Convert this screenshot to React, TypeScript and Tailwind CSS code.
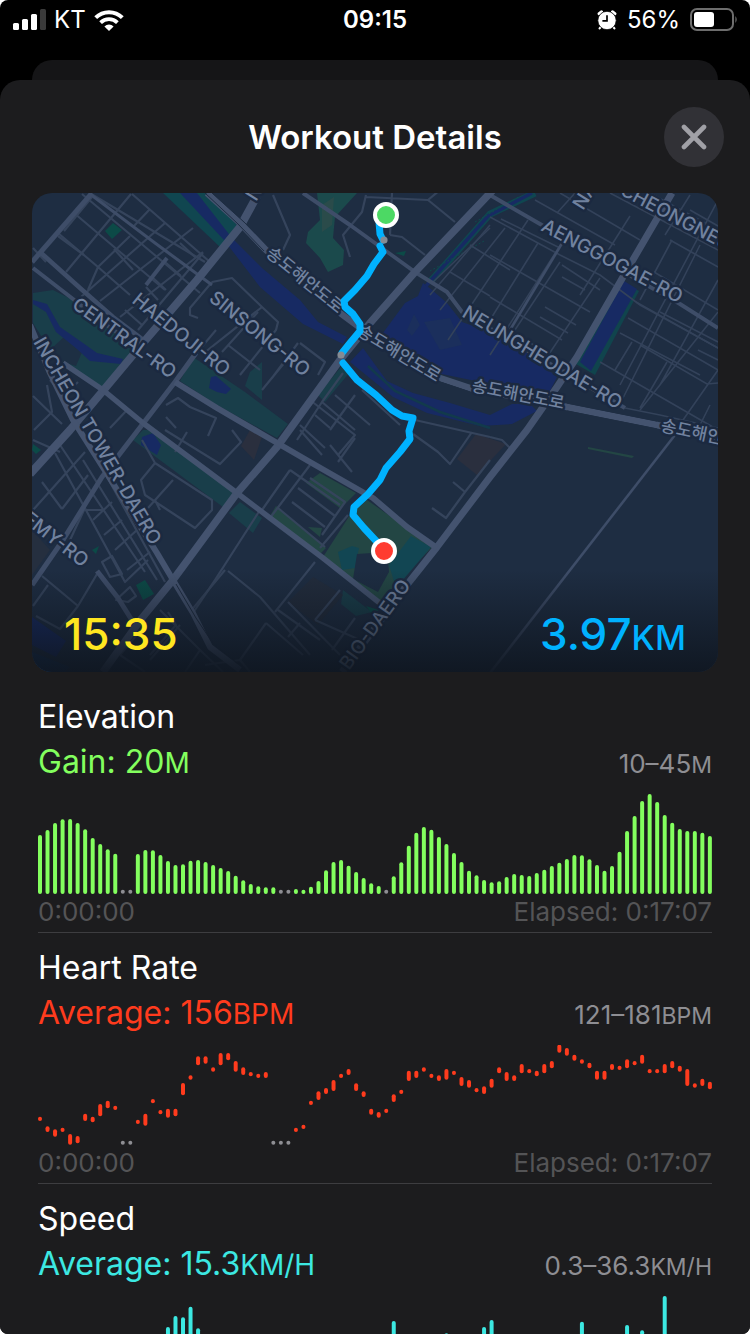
import React from 'react';

const SLOTS = 90;
const PITCH = 22.58;

type Bar = { slot: number; top: number; bottom: number; idle?: boolean };

// Heights run from 0 to 300; a zero marks a pause in the workout.
const elevation = [
  177, 192, 213, 224, 225, 213, 194, 168, 150, 134, 121, 0, 0, 120, 132, 131, 117, 99, 87, 89, 100, 102, 96, 87, 78, 69,
  55, 41, 30, 23, 20, 20, 0, 0, 15, 13, 22, 39, 71, 96, 102, 85, 66, 48, 32, 24, 0, 53, 95, 145, 184, 201, 193, 171, 150,
  123, 96, 70, 56, 42, 35, 38, 51, 60, 57, 54, 63, 73, 84, 94, 105, 117, 116, 104, 87, 70, 84, 127, 189, 234, 279, 300,
  276, 237, 214, 195, 189, 189, 184, 174,
];

const heart: ([number, number] | null)[] = [
  [260, 273], [289, 306], [298, 320], [293, 306], [312, 344], [318, 340], [251, 273], [260, 277], [222, 259], [212, 235],
  [227, 240], null, null, [269, 282], [251, 287], [207, 220], [240, 253], [236, 263], [236, 259], [159, 196], [136, 149],
  [79, 106], [79, 101], [112, 125], [69, 106], [69, 91], [93, 125], [112, 135], [126, 139], [131, 144], [126, 144], null,
  null, null, [293, 306], [284, 297], [212, 225], [184, 210], [174, 192], [150, 183], [131, 144], [117, 135], [160, 183],
  [184, 201], [236, 254], [246, 263], [236, 249], [193, 216], [179, 192], [122, 153], [122, 144], [112, 125], [131, 144],
  [136, 153], [117, 149], [122, 135], [141, 168], [150, 173], [174, 187], [169, 192], [146, 173], [112, 130], [126, 153],
  [136, 153], [102, 130], [117, 130], [122, 139], [102, 130], [93, 115], [44, 68], [54, 77], [74, 92], [88, 101],
  [98, 115], [122, 149], [122, 149], [102, 120], [107, 120], [88, 115], [93, 106], [74, 101], [117, 130], [117, 130],
  [102, 130], [93, 115], [107, 125], [117, 168], [160, 173], [146, 168], [155, 178],
];

const speed = [
  40, 62, 85, 90, 110, 96, 120, 132, 104, 98, 70, 0, 0, 64, 102, 140, 168, 207, 240, 236, 268, 203, 160, 142, 120, 96,
  110, 88, 92, 70, 48, 0, 0, 0, 30, 54, 90, 112, 134, 150, 142, 120, 96, 80, 72, 60, 0, 225, 160, 132, 148, 120, 110, 140,
  188, 162, 130, 120, 150, 207, 228, 166, 140, 132, 120, 144, 158, 132, 120, 98, 126, 160, 223, 170, 142, 130, 120, 152,
  213, 166, 197, 150, 132, 300, 170, 168, 140, 122, 110, 96,
];

const fromHeights = (values: number[]): Bar[] =>
  values.map((h, slot) => (h ? { slot, top: 300 - h, bottom: 300 } : { slot, top: 287, bottom: 299, idle: true }));

const fromRanges = (values: ([number, number] | null)[]): Bar[] =>
  values.map((v, slot) =>
    v ? { slot, top: v[0] - 45, bottom: v[1] - 45 } : { slot, top: 287, bottom: 299, idle: true },
  );

function Chart({ bars, color, label }: { bars: Bar[]; color: string; label: string }) {
  return (
    <svg viewBox={`0 0 ${Math.round(SLOTS * PITCH - 10)} 300`} className="mt-[10px] block w-full" role="img" aria-label={label}>
      {bars.map((b) => (
        <rect
          key={b.slot}
          x={b.slot * PITCH}
          y={b.top}
          width={12}
          height={b.bottom - b.top}
          rx={6}
          fill={b.idle ? '#8e8e93' : color}
        />
      ))}
    </svg>
  );
}

type MetricProps = {
  title: string;
  summary: string;
  range: string;
  unit: string;
  tone: string;
  color: string;
  bars: Bar[];
};

function Metric({ title, summary, range, unit, tone, color, bars }: MetricProps) {
  return (
    <section className="mb-3 border-b border-[#3d3d40] pb-1">
      <h2 className="text-[32px] leading-[45px] text-white">{title}</h2>
      <div className="flex h-[45px] items-baseline justify-between leading-[45px]">
        <p className={`text-[32px] ${tone}`}>
          {summary}
          <span className="text-[28px]">{unit}</span>
        </p>
        <p className="text-[26px] text-[#8e8e93]">
          {range}
          <span className="text-[23px]">{unit}</span>
        </p>
      </div>
      <Chart bars={bars} color={color} label={`${title} over time`} />
      <div className="mt-[2px] flex justify-between text-[26px] leading-8 text-[#545456]">
        <span>0:00:00</span>
        <span>Elapsed: 0:17:07</span>
      </div>
    </section>
  );
}

function StatusBar() {
  return (
    <header className="grid h-10 grid-cols-3 items-center px-3 text-white">
      <div className="flex items-center gap-2">
        <svg viewBox="0 0 34 22" className="h-[22px] w-[34px]" fill="#fff" aria-label="Signal">
          <rect x="1" y="14" width="6" height="7" rx="1.5" />
          <rect x="10" y="10" width="6" height="11" rx="1.5" />
          <rect x="19" y="5" width="6" height="16" rx="1.5" />
          <rect x="28" y="0" width="6" height="21" rx="1.5" fill="#3a3a3a" />
        </svg>
        <span className="text-[24px] leading-8">KT</span>
        <svg viewBox="0 0 30 22" className="h-[22px] w-[30px]" aria-label="Wi-Fi">
          <path d="M15 22 L10.4 17.4 A6.5 6.5 0 0 1 19.6 17.4 Z" fill="#fff" />
          <path d="M6.6 13.6 A11.9 11.9 0 0 1 23.4 13.6" fill="none" stroke="#fff" strokeWidth="3.8" />
          <path d="M1.7 8.7 A18.8 18.8 0 0 1 28.3 8.7" fill="none" stroke="#fff" strokeWidth="4" />
        </svg>
      </div>
      <time className="text-center text-[24px] font-semibold leading-8">09:15</time>
      <div className="flex items-center justify-end gap-[10px]">
        <svg viewBox="0 0 20 20" className="size-5" aria-label="Alarm">
          <g stroke="#fff" strokeWidth="2.2" strokeLinecap="round">
            <path d="M2.2 3.8 L4.4 1.9" strokeWidth="3.2" />
            <path d="M17.8 3.8 L15.6 1.9" strokeWidth="3.2" />
            <path d="M4.6 16 L2.6 18.4 M15.4 16 L17.4 18.4" />
          </g>
          <circle cx="10" cy="10.5" r="9.2" fill="#fff" stroke="#000" strokeWidth="0.8" />
          <path d="M10 5.2 V10.8 H5.4" fill="none" stroke="#000" strokeWidth="1.7" />
        </svg>
        <span className="text-[24px] leading-8">56%</span>
        <svg viewBox="0 0 48 24" className="h-6 w-12" aria-label="Battery">
          <rect x="1" y="1" width="42" height="21" rx="6" fill="none" stroke="#6d6d6d" strokeWidth="2" />
          <rect x="4" y="4" width="20" height="15" rx="3" fill="#fff" />
          <path d="M45.4 8 Q48 11.5 45.4 15 Z" fill="#6d6d6d" />
        </svg>
      </div>
    </header>
  );
}

// Streets around the blocks, in map coordinates.
const minorRoads = [
  // north-west blocks
  'M74 213 L165 290 M93 195 L205 262 M132 194 L210 262 M58 236 L84 255 M82 194 L200 293',
  'M131 194 L66 272 M150 209 L133 227 M165 223 L81 297 M193 228 L100 301 M203 252 L120 317',
  'M92 197 L64 231 M114 249 L133 270 M98 267 L72 245 M98 267 L130 295 M98 267 L88 290 M33 248 L46 262 M58 233 L98 267 L130 236',
  'M203 253 L138 330 M180 243 L196 258 M165 262 L181 276 M152 277 L166 290 M146 287 L158 300 M125 310 L142 325',
  'M212 282 L232 278 L262 307 L204 353 M212 282 L190 308 L190 315 L198 318 M262 307 L278 322 L276 330 L240 375',
  'M228 345 L260 370 M258 312 L222 352 M195 355 L216 330 M300 343 L325 362 L318 375 M272 378 L298 343 M262 390 L285 362',
  'M166 405 L178 398 L190 407 L216 418 L208 436 M166 417 L176 428 M110 428 L128 409',
  // south-west blocks
  'M33 396 L62 424 M33 440 L60 452 M47 385 L52 412 L34 430 M78 382 L64 396 L50 380',
  'M55 453 L125 582 L148 560 M60 445 L145 572 M83 460 L157 580 M95 455 L165 582 M42 482 L62 509 M33 510 L85 452',
  'M62 509 L88 475 M80 510 L104 510 M93 520 L112 502 M104 535 L122 520 M115 550 L137 530 M127 570 L150 552',
  'M84 510 L70 540 M102 562 L110 577 L122 574 L112 556 Z M116 600 L130 587 L136 596 L128 602 Z',
  'M42 576 L78 606 L60 629 L36 616 M33 606 L48 585 M97 574 L78 606',
  'M142 440 L155 463 L141 480 L145 495 L195 528 L212 510 L212 500 L155 463 M173 480 L148 508 M155 500 L160 510',
  'M165 430 L220 464 L241 442 L232 430 M187 432 L175 452',
  'M160 610 L200 650 L185 672 M180 625 L150 660 M190 612 L225 570 M200 650 L223 672 M120 655 L145 672 M120 655 L145 625 M168 612 L176 625 L150 655',
  // southern blocks
  'M260 510 L215 580 L193 613 M228 571 L260 597 M315 562 L275 612 M278 610 L320 640 M260 597 L310 655 M288 602 L340 655',
  'M340 590 L315 620 M315 620 L360 640 M332 650 L355 618 M266 623 L240 660 L250 672 M288 637 L300 623 M266 623 L303 655 M240 660 L205 665',
  // blocks around the lake bank
  'M343 373 L322 402 L297 440 M322 402 L355 430 M335 395 L370 425 M355 395 L330 430 M362 390 L400 425 M310 400 L355 435 L338 455',
  'M300 425 L325 448 M315 415 L330 428 M330 445 L352 472 M322 455 L300 430 M355 438 L338 462',
  'M290 470 L340 505 M310 478 L345 502 L322 535 M290 470 L262 510 M298 488 L335 516 M292 502 L325 527 M310 465 L270 518 M320 548 L348 515 M278 508 L325 547',
  'M415 420 L490 437 M413 434 L438 452 L450 464 L472 432 M453 482 L465 492 L446 518 L432 508 M465 492 L490 460',
  'M490 437 L502 440 L510 448 L490 478',
  // northern blocks
  'M366 195 L362 212 L343 235 L350 257 M273 195 L290 235 L283 250 M366 197 L428 200 L440 190 M428 200 L455 222 M390 235 L402 237 L425 255 M378 205 L379 220 M392 193 L390 235',
];

const gridRoads = [
  'M490 217 L560 255 L600 275 L640 305 L718 348 M501 219 L560 248 M490 255 L590 312 M490 297 L562 340 M450 272 L490 296 M535 200 L615 245 M560 193 L640 240',
  'M610 193 L718 250 M650 193 L718 230 M690 210 L718 226 M670 240 L718 267 M654 272 L718 310 M636 302 L718 348 M628 318 L718 370 M620 333 L700 375',
  'M600 362 L718 430 M660 312 L718 342 M562 265 L600 290 M562 277 L585 290 M545 307 L576 325 M540 317 L568 333 M525 340 L560 360 M698 350 L718 360',
  'M575 193 L557 213 M570 230 L490 355 M538 243 L490 320 M528 220 L448 340 M505 228 L440 310 M490 225 L430 295 M560 262 L505 345 M600 278 L545 360 M630 216 L580 295',
  'M718 200 L620 385 M700 245 L622 400 M672 240 L640 300 M690 195 L665 235 M718 280 L660 385 M718 312 L640 410 M632 342 L615 370 M718 370 L683 420 M667 362 L640 408',
  'M718 383 L707 384 L640 345 M625 408 L660 415 L718 428 M700 425 L710 405',
  'M432 283 L490 228 M470 245 L510 270',
];

const mapLabels = [
  { x: 71, y: 307, r: 36, t: 'CENTRAL-RO' },
  { x: 131, y: 302, r: 39, t: 'HAEDOJI-RO' },
  { x: 208, y: 300, r: 39, t: 'SINSONG-RO' },
  { x: 33, y: 342, r: 60, t: 'INCHEON TOWER-DAERO' },
  { x: 22, y: 521, r: 38, t: 'EMY-RO' },
  { x: 540, y: 230, r: 28, t: 'AENGGOGAE-RO' },
  { x: 461, y: 316, r: 31, t: 'NEUNGHEODAE-RO' },
  { x: 619, y: 194, r: 28, t: 'CHEONGNEUNG' },
  { x: 349, y: 671, r: -54, t: 'BIO-DAERO' },
  { x: 583, y: 211, r: -58, t: 'NA' },
  { x: 256, y: 202, r: -58, t: 'N' },
];

const coastLabels = [
  { x: 265, y: 255, r: 39, t: '송도해안도로' },
  { x: 356, y: 334, r: 31, t: '송도해안도로' },
  { x: 471, y: 391, r: 11, t: '송도해안도로' },
  { x: 660, y: 431, r: 12, t: '송도해안' },
];

function RouteMap() {
  return (
    <svg viewBox="32 193 686 479" className="block w-full" role="img" aria-label="Workout route map">
      <defs>
        <linearGradient id="fade" x1="0" y1="0" x2="0" y2="1">
          <stop offset="0" stopColor="#0f1620" stopOpacity="0" />
          <stop offset="1" stopColor="#0f1620" stopOpacity="0.92" />
        </linearGradient>
      </defs>
      <rect x="32" y="193" width="686" height="479" fill="#1e2d42" />

      {/* parks */}
      <g fill="#193e4a">
        <path d="M33 293 L53 290 L73 300 L117 333 L140 345 L127 357 L102 387 L63 362 L50 350 L33 323 Z" />
        <path d="M193 357 L245 392 L288 424 L277 438 L217 405 L180 381 Z" />
        <path d="M143 430 L133 440 L227 510 L238 496 L153 430 Z" />
        <path d="M240 502 L262 518 L253 533 L229 513 Z" />
        <path d="M163 193 L207 193 L237 225 L220 247 Z" fill="#104650" />
        <path d="M343 590 L372 612 L356 616 L341 604 Z" />
        <path d="M250 372 L262 362 L262 400 L245 386 Z" />
        <path d="M318 395 L345 362 L350 372 L325 402 Z" />
      </g>
      <path d="M317 193 L357 193 L335 217 L333 238 L344 250 L343 265 L328 272 L320 258 L306 243 L308 232 L320 220 Z" fill="#1b4a4c" />
      <path d="M322 205 L334 197 L332 225 L322 232 Z" fill="#2a4b4a" />
      <g fill="#0c4a47">
        <path d="M105 231 L113 223 L122 230 L112 239 Z" />
        <path d="M136 585 L145 580 L154 594 L143 600 Z" />
        <path d="M33 444 L41 450 L36 454 L32 450 Z" />
        <path d="M92 550 L99 546 L96 554 Z" />
        <path d="M366 606 L379 610 L372 614 Z" />
        <path d="M395 253 L406 251 L404 256 Z" />
      </g>
      <path d="M50 350 L66 335 L83 350 L76 366 L63 362 Z" fill="#1d2f43" />

      {/* green blocks beside the finish */}
      <g fill="#234644">
        <path d="M367 500 L407 528 L432 547 L380 601 L323 557 L350 515 Z" />
        <path d="M306 483 L320 473 L356 493 L346 503 L340 508 Z" />
        <path d="M276 506 L326 548 L319 555 L270 516 Z" />
        <path d="M308 527 L322 528 L320 537 Z" />
        <path d="M588 447 L634 456 L632 458 L588 449 Z" />
      </g>
      <path d="M411 536 L431 547 L396 588 L389 565 Z" fill="#124653" />
      <path d="M338 552 L352 546 L359 548 L355 568 L342 570 Z" fill="#124653" />
      <path d="M357 554 L372 553 L388 560 L389 572 L378 592 L353 579 Z" fill="#1d2d42" />
      <g fill="#2a2f3e">
        <path d="M476 434 L506 444 L477 475 L457 459 Z" />
        <path d="M250 430 L262 437 L254 460 L241 446 Z" />
        <path d="M313 577 L343 595 L318 625 L288 602 Z" fill="#222c3c" />
        <path d="M32 530 L50 550 L32 575 Z" fill="#252f3f" />
      </g>

      {/* water */}
      <g fill="#172a63">
        <path d="M180 193 L197 193 L232 238 L262 268 L300 300 L318 322 L347 337 L343 344 L303 324 L260 287 L224 240 Z" />
        <path d="M363 348 L376 366 L387 381 L413 393 L450 403 L490 415 L512 404 L530 404 L537 411 L512 424 L480 426 L427 413 L393 397 L350 362 Z" />
        <path d="M423 283 L432 290 L447 303 L462 322 L490 332 L530 355 L557 377 L550 391 L490 384 L437 373 L380 337 L405 303 L418 296 Z" />
        <path d="M33 300 L47 304 L60 327 L83 343 L97 353 L123 359 L121 364 L90 361 L77 349 L56 332 L46 312 L33 304 Z" />
        <path d="M211 377 L216 376 L231 389 L226 394 L217 392 L209 388 Z" />
        <path d="M142 437 L153 433 L161 445 L157 455 L141 445 Z" />
        <path d="M32 617 L66 641 L56 657 L32 645 Z" />
        <path d="M32 652 L70 667 L65 672 L38 672 Z" fill="#143056" />
      </g>
      <path d="M407 330 L414 314 L420 325 L412 336 Z M424 322 L450 318 L462 345 L440 350 Z" fill="#1b2f5c" />
      <path d="M535 193 L490 214 L430 282" fill="none" stroke="#0f4650" strokeWidth="7" />
      <path d="M532 193 L488 216 L426 286" fill="none" stroke="#172a63" strokeWidth="3.4" />
      <path d="M368 366 L395 391 L440 412 L490 428" fill="none" stroke="#123a4c" strokeWidth="2.5" />
      <path d="M620 281 L639 291 L595 375 L576 364 Z" fill="#10444d" />
      <path d="M624 281 L637 289 L591 371 L580 362 Z" fill="#172a63" />
      <path d="M484 241 L430 271 M475 222 L520 196" stroke="#104a4c" strokeWidth="1" strokeDasharray="2 2" fill="none" />

      {/* small streets */}
      <g fill="none" stroke="#35445c" strokeWidth="2.2" strokeLinejoin="round">
        {minorRoads.map((d) => (
          <path key={d} d={d} />
        ))}
      </g>
      <g fill="none" stroke="#33425a" strokeWidth="1.6">
        {gridRoads.map((d) => (
          <path key={d} d={d} />
        ))}
      </g>

      {/* main streets */}
      <g fill="none" stroke="#3e4d68" strokeLinejoin="round">
        <path d="M675 435 L490 673" strokeWidth="2.6" />
        <path d="M303 193 L350 225 L415 272 L447 292 L462 312 L625 408" strokeWidth="4" />
        <path d="M490 195 L540 224 L680 304 L718 328" strokeWidth="4" />
        <path d="M33 268 L73 299 L113 330 L140 346" strokeWidth="4" />
        <path d="M40 252 L80 288 L113 317 L146 342" strokeWidth="4.5" />
        <path d="M92 193 L32 262" strokeWidth="5" />
        <path d="M90 194 L155 243 L212 285" strokeWidth="3" />
        <path d="M97 571 L118 598 L133 622" strokeWidth="5" />
        <path d="M196 353 L175 382 L102 477 L63 540 L32 585" strokeWidth="5" />
        <path d="M570 230 L510 330" strokeWidth="2.6" />
        <path d="M167 258 L146 285" strokeWidth="4" />
      </g>
      <g fill="none" stroke="#44536f" strokeLinejoin="round">
        <path d="M257 196 L240 227 L197 280 L143 343 L102 392 L70 430 L30 474" strokeWidth="8" />
        <path d="M493 190 L415 272 L370 323 L340 360 L277 447 L237 493 L173 580 L142 618 L103 672" strokeWidth="7.5" />
        <path d="M672 193 L627 270 L577 357 L557 387 L527 430 L490 477 L437 547 L410 581 L342 672" strokeWidth="7" />
        <path d="M175 382 L217 408 L260 433 L310 462 L373 498 L407 527 L437 548" strokeWidth="6" />
        <path d="M63 363 L103 390 L143 423 L237 493 L270 518 L323 558 L381 604" strokeWidth="5.5" />
        <path d="M30 325 L50 373 L73 420 L157 553 L173 580 L193 613 L210 647 L240 670" strokeWidth="6" />
        <path d="M207 193 L240 223 L266 250 L340 313 L363 330 L437 377 L470 388 L567 407 L657 425 L718 440" strokeWidth="6.5" />
      </g>
      <path
        d="M205 193 L238 224 L264 251 M212 193 L244 222 L268 246 M338 317 L361 335 M437 381 L470 392 M567 403 L657 421 M567 411 L657 429 M176 584 L196 618 L212 642 L238 664"
        fill="none"
        stroke="#1e2d42"
        strokeWidth="1"
      />

      {/* labels */}
      <g
        fill="#71829f"
        stroke="#1b2940"
        strokeWidth="5"
        paintOrder="stroke"
        strokeLinejoin="round"
        className="font-['Inter','Noto_Sans_CJK_KR',sans-serif] font-medium"
      >
        {mapLabels.map((l) => (
          <text key={l.t} className="text-[19px]" transform={`translate(${l.x} ${l.y}) rotate(${l.r})`}>
            {l.t}
          </text>
        ))}
        {coastLabels.map((l) => (
          <text key={l.x} className="text-[17px]" transform={`translate(${l.x} ${l.y}) rotate(${l.r})`}>
            {l.t}
          </text>
        ))}
      </g>

      <rect x="32" y="570" width="686" height="102" fill="url(#fade)" />

      {/* route */}
      <g fill="none" stroke="#00b2ff" strokeWidth="7" strokeLinecap="round" strokeLinejoin="round">
        <path d="M379 222 L380 234 L383 240" />
        <path d="M380 246 L383 252 L374 264 L367 276 L355 290 L344 301 L345 307 L353 314 L360 324 L360 331 L350 343 L342 353" />
        <path d="M343 363 L357 380 L376 395 L392 410 L402 416 L413 418 L409 431 L410 439 L400 452 L386 468 L380 480 L368 494 L354 507 L353 515 L364 528 L378 543" />
      </g>
      <circle cx="384" cy="240" r="3.6" fill="#858b93" />
      <circle cx="341" cy="355" r="3.6" fill="#858b93" />
      <circle cx="386" cy="215" r="11" fill="#4cd964" stroke="#fff" strokeWidth="4" />
      <circle cx="384" cy="551" r="11" fill="#ff3b30" stroke="#fff" strokeWidth="4" />
    </svg>
  );
}

export default function App() {
  return (
    <div className="h-screen bg-white font-['Inter','Noto_Sans_CJK_KR',sans-serif]">
      <div className="flex h-full flex-col overflow-hidden rounded-lg bg-black">
        <StatusBar />
        <div className="mx-8 mt-5 h-5 shrink-0 rounded-t-[20px] bg-[#151517]" />
        <main className="min-h-0 flex-1 overflow-y-auto rounded-t-[20px] bg-[#1c1c1e] [scrollbar-width:none]">
          <div className="grid grid-cols-[60px_1fr_60px] items-center px-[26px] pt-[27px] pb-[26px]">
            <h1 className="col-start-2 text-center text-[33px] leading-10 font-semibold text-white">Workout Details</h1>
            <button
              type="button"
              aria-label="Close"
              className="flex size-[60px] items-center justify-center rounded-full bg-[#313136]"
            >
              <svg viewBox="0 0 26 26" className="size-[26px]" aria-hidden="true">
                <path d="M3 3 L23 23 M23 3 L3 23" stroke="#a0a0a6" strokeWidth="4.6" strokeLinecap="round" />
              </svg>
            </button>
          </div>

          <div className="relative mx-8 overflow-hidden rounded-[20px]">
            <RouteMap />
            <div className="absolute inset-x-0 bottom-0 flex items-baseline justify-between px-8 pb-2 text-[44px] leading-[52px] font-medium">
              <span className="text-[#ffe620]">15:35</span>
              <span className="text-[#00b2ff]">
                3.97<span className="text-[34px]">KM</span>
              </span>
            </div>
          </div>

          <div className="px-[38px] pt-[22px]">
            <Metric
              title="Elevation"
              summary="Gain: 20"
              range="10–45"
              unit="M"
              tone="text-[#83ff5e]"
              color="#83ff5e"
              bars={fromHeights(elevation)}
            />
            <Metric
              title="Heart Rate"
              summary="Average: 156"
              range="121–181"
              unit="BPM"
              tone="text-[#ff3b1d]"
              color="#ff3b1d"
              bars={fromRanges(heart)}
            />
            <Metric
              title="Speed"
              summary="Average: 15.3"
              range="0.3–36.3"
              unit="KM/H"
              tone="text-[#3ce8e2]"
              color="#3ce8e2"
              bars={fromHeights(speed)}
            />
          </div>
        </main>
      </div>
    </div>
  );
}
